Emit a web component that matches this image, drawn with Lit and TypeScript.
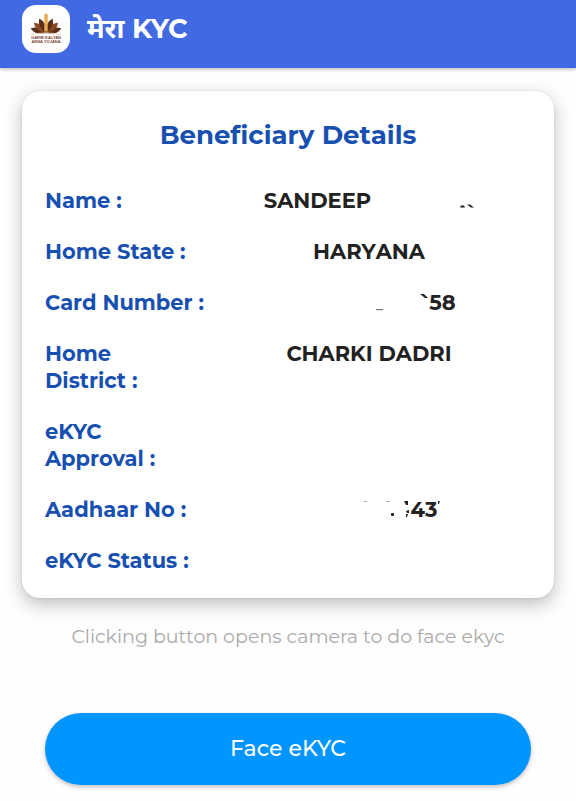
import { LitElement, html, css, svg, TemplateResult } from "lit";
import { customElement } from "lit/decorators.js";

interface Field {
  label: string;
  value?: TemplateResult | string;
}

// Masked values keep only traces of the hidden characters.
const nameTrace = html`<svg class="trace" width="103" height="27" viewBox="0 0 103 27" aria-hidden="true">
  <path d="M89 20.500l1-2h3l1 2zM96 17.500h3l4 3h-3z" fill="#222" />
</svg>`;

const cardTrace = html`<svg class="trace" width="147" height="27" viewBox="0 0 147 27" aria-hidden="true">
  <path d="M94 20h7v1.200h-7z" fill="#777" />
  <path d="M138 5h4l4 4h-3z" fill="#222" />
</svg>`;

const aadhaarTrace = html`<svg class="trace" width="114" height="27" viewBox="0 0 114 27" aria-hidden="true">
  <path d="M67 5h3v1h-3zM89 5h4v1h-4z" fill="#aaa" />
  <rect x="94" y="17" width="3" height="3" rx="1" fill="#222" />
  <path d="M107 5h4v4h-2zM109 15l3-1v3h-2zM109 18h2l-1 3h-1z" fill="#222" />
</svg>`;

const aadhaarTail = html`<svg class="trace" width="4" height="27" viewBox="0 0 4 27" aria-hidden="true">
  <path d="M1 5h2l-1 3h-1z" fill="#333" />
</svg>`;

const fields: Field[] = [
  { label: "Name\u00a0:", value: html`<span>SANDEEP</span>${nameTrace}` },
  { label: "Home State\u00a0:", value: "HARYANA" },
  { label: "Card Number\u00a0:", value: html`${cardTrace}<span>58</span>` },
  { label: "Home District\u00a0:", value: "CHARKI DADRI" },
  { label: "eKYC Approval\u00a0:" },
  { label: "Aadhaar No\u00a0:", value: html`${aadhaarTrace}<span>43</span>${aadhaarTail}` },
  { label: "eKYC Status\u00a0:" },
];

const leaves: [number, string][] = [
  [-74, "#5b2d18"],
  [74, "#5b2d18"],
  [-50, "#8a4a22"],
  [50, "#8a4a22"],
  [-25, "#5b2d18"],
  [25, "#5b2d18"],
];

@customElement("app-logo")
export class AppLogo extends LitElement {
  static styles = css`
    :host {
      display: block;
      flex: none;
    }
    .mark {
      display: block;
    }
    .caption {
      font: 700 4px "Liberation Sans", sans-serif;
      fill: #7a4a34;
      text-anchor: middle;
    }
  `;

  render() {
    return html`<svg class="mark" width="48" height="48" viewBox="0 0 48 48" role="img" aria-label="Logo">
      <rect width="48" height="48" rx="14" fill="#fff" />
      ${leaves.map(
        ([angle, fill]) => svg`<path d="M24 28q-5.500-9 0-16q5.500 7 0 16z" fill=${fill} transform="rotate(${angle} 24 28)" />`
      )}
      <path d="M22.300 10.500q0-2 1.700-2t1.700 2v16h-3.400z" fill="#e8aa50" />
      <path d="M9 29.500q8-1.500 15-1.500t15 1.500" fill="none" stroke="#f0cfb0" />
      <text class="caption" x="24" y="34">GARIB KALYAN</text>
      <text class="caption" x="24" y="38">ANNA YOJANA</text>
    </svg>`;
  }
}

@customElement("app-root")
export class AppRoot extends LitElement {
  static styles = css`
    :host {
      display: block;
      min-height: 100vh;
      background: #fefefe;
      font-family: "Montserrat", "Inter", "Noto Sans", "Noto Sans Devanagari", sans-serif;
    }
    .bar {
      display: flex;
      align-items: center;
      gap: 17px;
      padding: 5px 22px 15px;
      background: #4169e1;
      box-shadow: 0 1px 4px rgba(0, 0, 0, 0.3);
      color: #fff;
    }
    .app-name {
      margin: 0;
      font-size: 27px;
      line-height: 48px;
      font-weight: 700;
    }
    .card {
      margin: 23px 22px 0;
      padding: 24px 23px;
      border-radius: 18px;
      background: #fff;
      box-shadow: 0 6px 18px rgba(0, 0, 0, 0.26), 0 0 2px rgba(0, 0, 0, 0.12);
    }
    .title {
      margin: 0 0 32px;
      font-size: 26px;
      line-height: 40px;
      font-weight: 700;
      font-kerning: none;
      text-align: center;
      color: #1750b0;
    }
    .fields {
      display: flex;
      flex-direction: column;
      gap: 24px;
      margin: 0;
      font-size: 21px;
      line-height: 27px;
      font-weight: 700;
    }
    .row {
      display: grid;
      grid-template-columns: 1fr 2fr;
    }
    .label {
      color: #1750b0;
    }
    .value {
      display: flex;
      justify-content: center;
      margin: 0;
      font-kerning: none;
      color: #222;
    }
    .trace {
      display: block;
      flex: none;
    }
    .hint {
      margin: 25px 22px 0;
      font-size: 19px;
      line-height: 28px;
      text-align: center;
      color: #aaa;
    }
    .action {
      padding: 62px 45px 16px;
    }
    .button {
      display: block;
      width: 100%;
      padding: 20px;
      border: 0;
      border-radius: 36px;
      background: #0095ff;
      box-shadow: 0 2px 4px rgba(0, 0, 0, 0.25);
      color: #fff;
      font-family: inherit;
      font-size: 22px;
      line-height: 32px;
      font-weight: 500;
      cursor: pointer;
    }
  `;

  render() {
    return html`
      <header class="bar">
        <app-logo></app-logo>
        <h1 class="app-name">मेरा KYC</h1>
      </header>
      <main>
        <section class="card">
          <h2 class="title">Beneficiary Details</h2>
          <dl class="fields">
            ${fields.map(
              (f) => html`<div class="row">
                <dt class="label">${f.label}</dt>
                <dd class="value">${f.value}</dd>
              </div>`
            )}
          </dl>
        </section>
        <p class="hint">Clicking button opens camera to do face ekyc</p>
        <div class="action">
          <button class="button" type="button">Face eKYC</button>
        </div>
      </main>
    `;
  }
}
